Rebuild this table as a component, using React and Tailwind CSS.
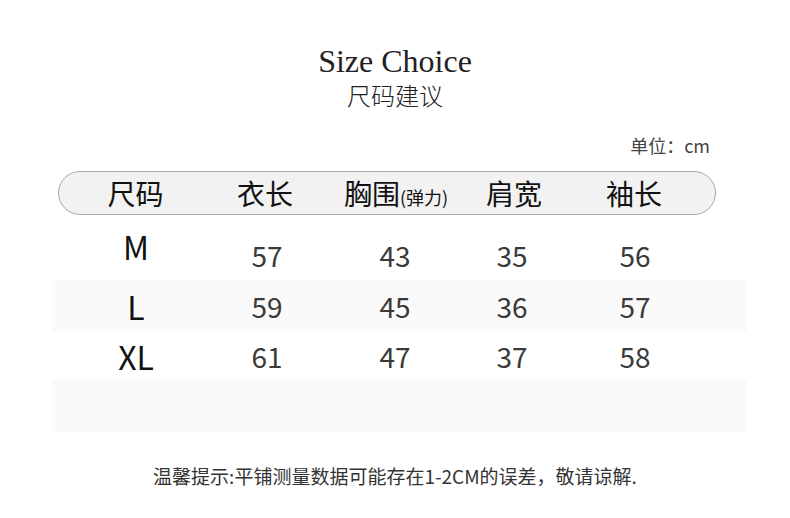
import React from "react";

const cjk = { fontFamily: '"Noto Sans CJK SC", "Noto Sans", sans-serif' };

const rows = [
  { size: "M", vals: ["57", "43", "35", "56"], h: "h-[55px] pt-[4px]", bg: "bg-white", lift: "mb-[18px]" },
  { size: "L", vals: ["59", "45", "36", "57"], h: "h-[52px]", bg: "bg-[#fafafa]", lift: "" },
  { size: "XL", vals: ["61", "47", "37", "58"], h: "h-[47px]", bg: "bg-white", lift: "" },
];

export default function App() {
  return (
    <div className="w-[790px] h-[518px] bg-white flex flex-col" style={cjk}>
      {/* Title */}
      <div className="pt-[43px] flex flex-col items-center">
        <h1
          className="text-[32px] leading-[36px] text-[#222]"
          style={{ fontFamily: '"Liberation Serif", "DejaVu Serif", serif' }}
        >
          Size Choice
        </h1>
        <h2 className="mt-[2px] text-[24px] leading-[28px] text-[#222] font-light">尺码建议</h2>
      </div>

      {/* Unit */}
      <div className="mt-[25px] pr-[80px] flex justify-end">
        <span className="text-[18px] leading-[22px] text-[#444]">单位：cm</span>
      </div>

      {/* Header pill */}
      <div className="mt-[15px] ml-[58px] w-[658px] h-[44px] rounded-full border border-[#a8a8a8] bg-[#f2f2f2] grid grid-cols-[153px_106px_156px_80px_160px] items-center text-[#111]">
        <div className="text-center text-[28px] leading-none">尺码</div>
        <div className="text-center text-[28px] leading-none">衣长</div>
        <div className="text-center flex items-end justify-center">
          <span className="text-[28px] leading-none">胸围</span>
          <span className="text-[18px] leading-none mb-[1px]">(弹力)</span>
        </div>
        <div className="text-center text-[28px] leading-none">肩宽</div>
        <div className="text-center text-[28px] leading-none">袖长</div>
      </div>

      {/* Body */}
      <div className="mt-[10px] ml-[52px] w-[695px] flex flex-col">
        {rows.map((r) => (
          <div
            key={r.size}
            className={`${r.h} ${r.bg} grid grid-cols-[168px_94px_162px_72px_174px] items-center`}
          >
            <div className={`text-center text-[32px] leading-none text-[#111] ${r.lift}`}>{r.size}</div>
            {r.vals.map((v, i) => (
              <div key={i} className="text-center text-[28px] leading-none text-[#3a3a3a]">
                {v}
              </div>
            ))}
          </div>
        ))}
        <div className="h-[53px] bg-[#fafafa]" />
      </div>

      {/* Footer note */}
      <div className="mt-[31px] flex justify-center">
        <p className="text-[19px] leading-[26px] text-[#333]">
          温馨提示:平铺测量数据可能存在1-2CM的误差，敬请谅解.
        </p>
      </div>
    </div>
  );
}
